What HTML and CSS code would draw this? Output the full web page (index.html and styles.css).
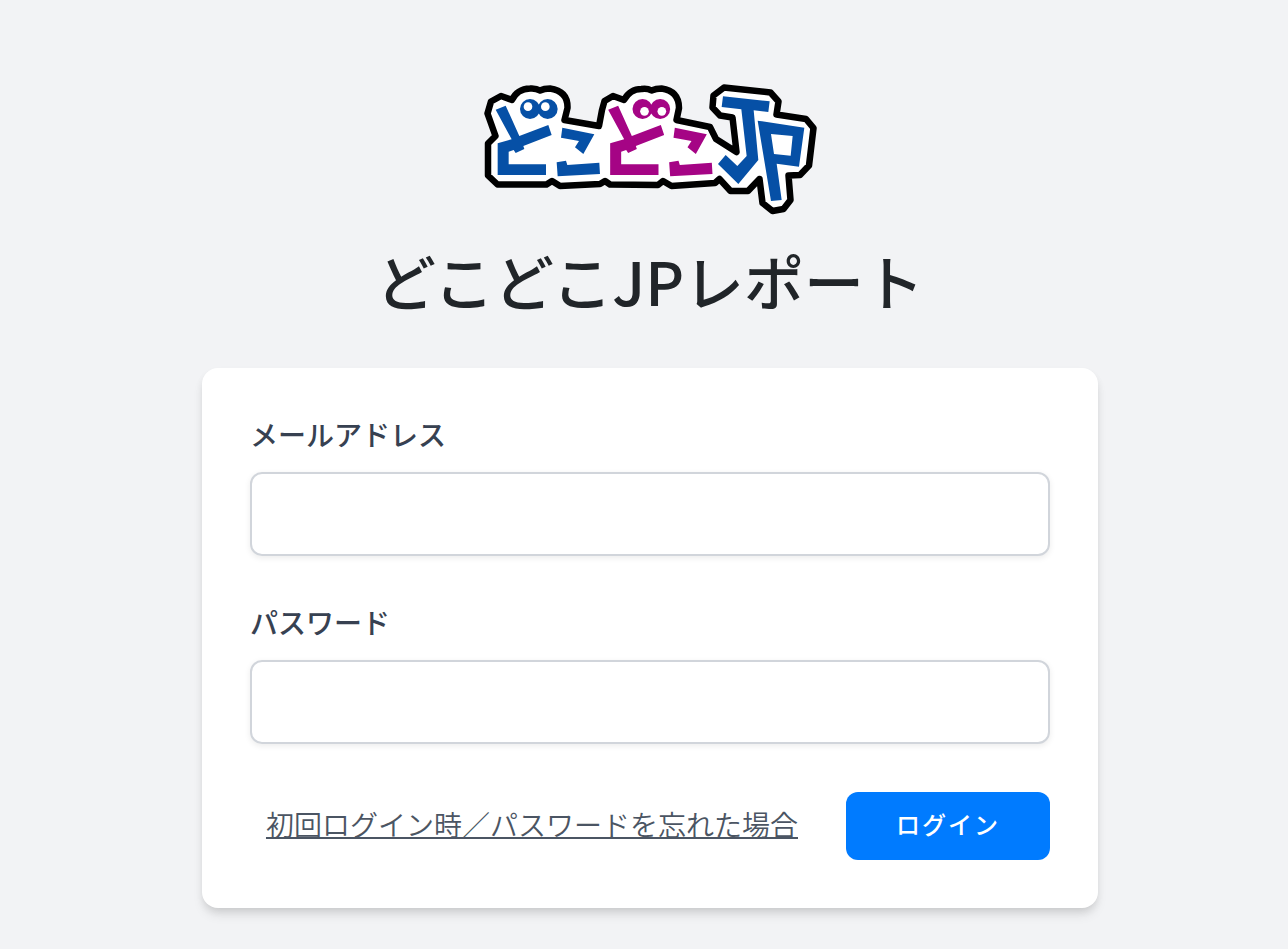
FILE: index.html
```html
<!DOCTYPE html>
<html lang="ja">
<head>
<meta charset="utf-8">
<meta name="viewport" content="width=device-width, initial-scale=1">
<title>どこどこJPレポート</title>
<link rel="stylesheet" href="styles.css">
</head>
<body>
<main class="login">
  <svg class="logo" viewBox="483 84 334 132" role="img" aria-label="どこどこJP">
    <path class="logo-base" d="M487.500 113.500L491 101.500L501 96L512 100Q517 89 530 88.500Q536 88 540 90.500Q544 88.500 550 88.500Q568 91 567.500 108L564.500 120L599 126L602 110L604.500 101L613 96L624 100Q630 89 641.500 89Q647 88 651.500 90.500Q656 88.500 661.500 88.500Q679 91 679 108L676.500 120L710 127L716 139L736.500 152L732.500 117.500L720 115.500L712.500 107.500L713.500 95.500L724 87.500L770.500 92.500L778.500 101.500L776.500 114.500L806 119L813.500 128L809 165.500L800 175L788.500 175.500L790.500 200L783.500 209L772.500 211L762.500 203L759.500 179L748 191L730.500 191L719.500 179L715 183L671.500 186L663 181L658 185L610 184.500L605 181L600 184L560 186L552 181L546.500 184.500L497.500 184.500L488 175.500V143.500L495.500 136Z"/>
    <defs>
      <g id="doko">
        <path d="M62 104L92 92L133 183L220 150L230 180L145 213L148 222L122 234L116 225L101 230V268H213V300H68V205L110 193ZM262 158L358 178L325 237L300 217L312 198L258 188ZM245 262L273 257L277 270L373 263L375 297L248 304Z"/>
        <circle cx="165" cy="102" r="30"/>
        <circle cx="218" cy="102" r="30"/>
      </g>
    </defs>
    <g class="logo-blue" transform="translate(475 75) scale(.3333)">
      <use href="#doko"/>
      <circle class="logo-light" cx="159" cy="95" r="13"/>
      <circle class="logo-light" cx="211" cy="95" r="13"/>
    </g>
    <g class="logo-pink" transform="translate(587.500 75) scale(.3333)">
      <use href="#doko"/>
      <circle class="logo-light" cx="171" cy="109" r="13"/>
      <circle class="logo-light" cx="223" cy="109" r="13"/>
    </g>
    <path class="logo-blue" fill-rule="evenodd" transform="translate(700 75) scale(.3333)" d="M69 64L209 79L205 111L161 106L175 255L115 327L54 267L77 240L112 273L140 243L124 103L65 96ZM173 137L313 158L297 275L230 266L245 375L213 378ZM213 177L222 237L272 242L278 183Z"/>
  </svg>
  <h1 class="title">どこどこJPレポート</h1>
  <form class="card">
    <div class="field">
      <label class="label" for="email">メールアドレス</label>
      <input class="input" id="email" type="email" autocomplete="username">
    </div>
    <div class="field">
      <label class="label" for="password">パスワード</label>
      <input class="input" id="password" type="password" autocomplete="current-password">
    </div>
    <div class="actions">
      <a class="link" href="#">初回ログイン時／パスワードを忘れた場合</a>
      <button class="button" type="submit">ログイン</button>
    </div>
  </form>
</main>
</body>
</html>
```
FILE: styles.css
```css
*, *::before, *::after {
  box-sizing: border-box;
}

body {
  margin: 0;
  background: #f2f3f5;
  color: #212529;
  font-family: "Noto Sans CJK JP", sans-serif;
}

.login {
  display: flex;
  flex-direction: column;
  align-items: center;
  padding: 84px 0 40px 12px;
}

.logo {
  width: 334px;
  height: auto;
}

.logo-base {
  fill: #fff;
  stroke: #000;
  stroke-width: 6.5;
  stroke-linejoin: round;
}

.logo-blue {
  fill: #0650a6;
}

.logo-pink {
  fill: #a50485;
}

.logo-light {
  fill: #fff;
}

.title {
  margin: 16px 0 40px;
  font-size: 60px;
  line-height: 96px;
  font-weight: 500;
}

.card {
  width: 100%;
  max-width: 896px;
  padding: 48px;
  border-radius: 16px;
  background: #fff;
  box-shadow: 0 8px 12px -2px rgba(0, 0, 0, 0.1), 0 4px 8px -2px rgba(0, 0, 0, 0.1);
}

.field {
  margin-bottom: 48px;
}

.label {
  display: block;
  margin-bottom: 20px;
  color: #374151;
  font-size: 28px;
  line-height: 36px;
  font-weight: 500;
}

.input {
  display: block;
  width: 100%;
  height: 84px;
  padding: 16px 24px;
  border: 2px solid #d1d5db;
  border-radius: 12px;
  background: #fff;
  box-shadow: 0 2px 6px rgba(0, 0, 0, 0.08);
  font: inherit;
  font-size: 32px;
}

.actions {
  display: flex;
  align-items: center;
  justify-content: flex-end;
  gap: 48px;
}

.link {
  padding-bottom: 4px;
  color: #4b5563;
  font-size: 28px;
  line-height: 40px;
  font-weight: 350;
  text-decoration: underline;
  text-decoration-thickness: 2px;
}

.button {
  padding: 16px 50px 20px;
  border: 0;
  border-radius: 12px;
  background: #007bff;
  color: #fff;
  font-family: inherit;
  font-size: 24px;
  line-height: 32px;
  font-weight: 500;
  letter-spacing: 2px;
}
```
